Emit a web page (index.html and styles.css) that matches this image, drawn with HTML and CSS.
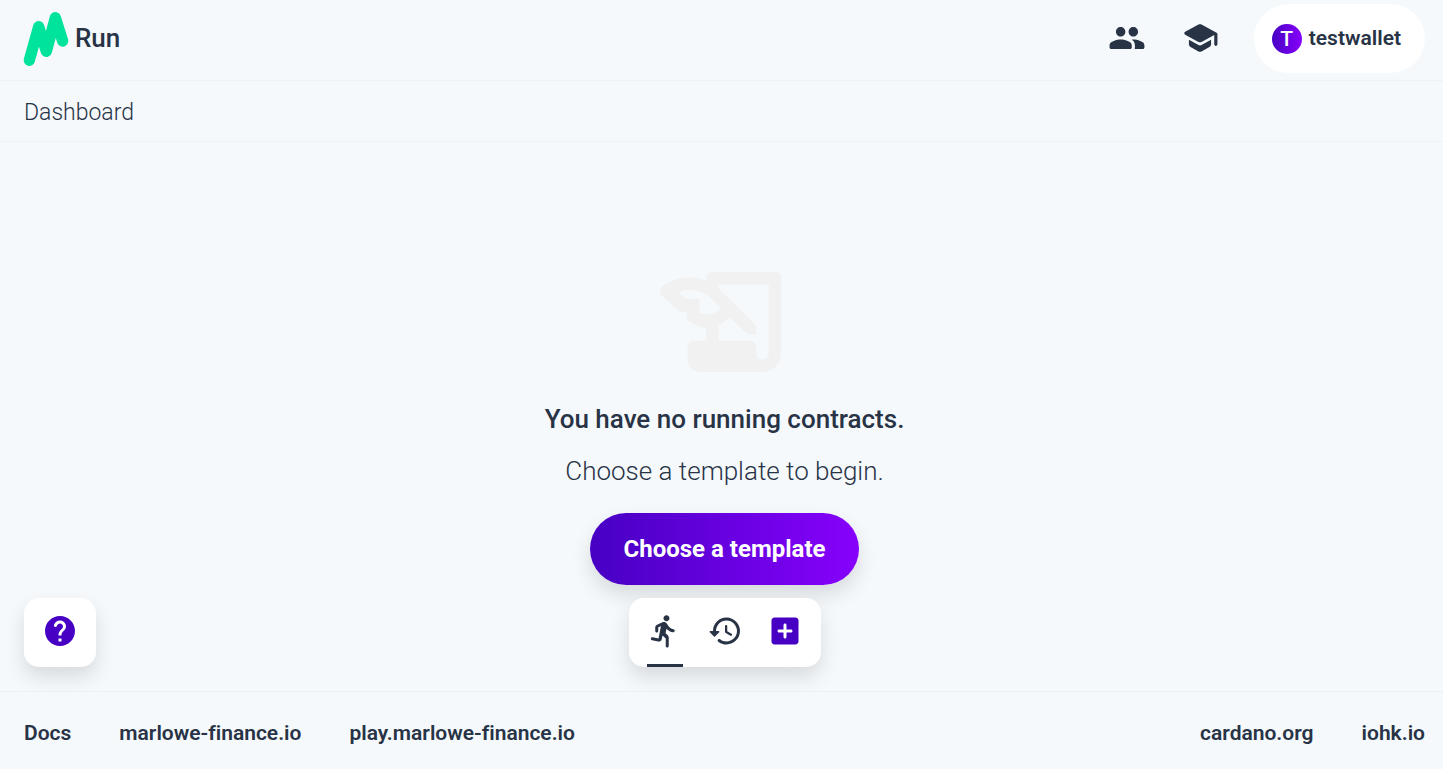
FILE: index.html
```html
<!DOCTYPE html>
<html lang="en">
<head>
<meta charset="utf-8">
<meta name="viewport" content="width=device-width, initial-scale=1">
<title>Marlowe Run</title>
<link rel="stylesheet" href="styles.css">
</head>
<body>
<div class="page">
  <header class="header">
    <a class="brand" href="#">
      <svg class="brand-mark" viewBox="0 0 132 160" aria-hidden="true"><path d="M16 144L44 43L67 117L94 16L116 86" fill="none" stroke="#00e39c" stroke-width="34" stroke-linecap="round" stroke-linejoin="round"/></svg>
      <span class="brand-name">Run</span>
    </a>
    <nav class="header-nav">
      <a class="icon-link" href="#" aria-label="Contacts">
        <svg class="icon large" viewBox="0 0 24 24"><path d="M16 11c1.660 0 2.990-1.340 2.990-3S17.660 5 16 5s-3 1.340-3 3 1.340 3 3 3zM8 11c1.660 0 2.990-1.340 2.990-3S9.660 5 8 5 5 6.340 5 8s1.340 3 3 3zM8 13c-2.330 0-7 1.170-7 3.500V18c0 .55.45 1 1 1h12c.55 0 1-.45 1-1v-1.500C15 14.170 10.330 13 8 13zM16 13c-.29 0-.62.020-.97.050.02.010.03.030.04.040 1.140.830 1.930 1.940 1.930 3.410V18c0 .35-.07.690-.18 1H22c.55 0 1-.45 1-1v-1.500c0-2.330-4.670-3.500-7-3.500z"/></svg>
      </a>
      <a class="icon-link" href="#" aria-label="Tutorials">
        <svg class="icon large" viewBox="0 0 24 24"><path d="M5 13.180v2.810c0 .73.4 1.410 1.040 1.760l5 2.730c.6.330 1.320.330 1.920 0l5-2.730c.64-.35 1.040-1.030 1.040-1.760v-2.810l-6.040 3.300c-.6.330-1.320.330-1.920 0L5 13.180zm6.040-9.660l-8.430 4.600c-.69.380-.69 1.380 0 1.760l8.430 4.600c.6.330 1.320.330 1.920 0L21 10.090V16c0 .55.45 1 1 1s1-.45 1-1V9.590c0-.37-.2-.7-.52-.88l-9.520-5.190c-.6-.32-1.320-.32-1.920 0z"/></svg>
      </a>
      <button class="wallet" type="button"><span class="avatar">T</span><span>testwallet</span></button>
    </nav>
  </header>
  <h1 class="title-bar">Dashboard</h1>
  <main class="main">
    <section class="empty">
      <svg class="empty-icon" viewBox="0 0 24 24" aria-hidden="true"><path fill-rule="evenodd" d="M9 5v.38c-.83-.33-1.720-.5-2.610-.5-1.420 0-2.940.43-4.350 1.390-.51.360-.58 1.090-.14 1.530l2.870 2.610h1.110v1.110c.86.860 1.980 1.310 3.110 1.360V15H7c-.55 0-1 .45-1 1v2c0 1.100.9 2 2 2h10c1.660 0 3-1.340 3-3V5c0-.55-.45-1-1-1H10c-.55 0-1 .45-1 1zM7.890 10.410V8.260H5.610L4.570 7.220C5.140 7 5.760 6.880 6.390 6.880c1.340 0 2.590.52 3.540 1.460l1.410 1.410-.2.2c-.51.510-1.190.8-1.920.8-.47 0-.93-.12-1.330-.34zM19 17c0 .55-.45 1-1 1s-1-.45-1-1v-1c0-.55-.45-1-1-1h-5v-2.590c.57-.23 1.100-.57 1.560-1.030l.2-.2L15.590 14H17v-1.410l-6-5.970V6h8v11z"/></svg>
      <h2 class="empty-title">You have no running contracts.</h2>
      <p class="empty-text">Choose a template to begin.</p>
      <button class="primary" type="button">Choose a template</button>
    </section>
    <div class="dock">
      <button class="card help" type="button" aria-label="Help">
        <svg class="icon accent" viewBox="0 0 24 24"><path fill-rule="evenodd" d="M12 2C6.480 2 2 6.480 2 12s4.480 10 10 10 10-4.480 10-10S17.520 2 12 2zM13 19h-2v-2h2v2zM15.070 11.250l-.9.920C13.450 12.900 13 13.500 13 15h-2v-.5c0-1.100.45-2.100 1.170-2.830l1.240-1.260c.37-.36.59-.86.59-1.410 0-1.100-.9-2-2-2-.93 0-1.710.63-1.930 1.490a.97.970 0 0 1-.93.760h-.3c-.62 0-1.080-.6-.91-1.200C8.440 6.290 10.070 5 12 5c2.210 0 4 1.790 4 4 0 .88-.36 1.680-.93 2.250z"/></svg>
      </button>
      <div class="card tabs">
        <button class="tab active" type="button" aria-label="Running contracts">
          <svg class="icon" viewBox="0 0 24 24"><path d="M13.490 5.480c1.100 0 2-.9 2-2s-.9-2-2-2-2 .9-2 2 .9 2 2 2zM9.890 19.380l1-4.400 2.100 2v5c0 .55.45 1 1 1s1-.45 1-1v-5.640c0-.55-.22-1.070-.62-1.450l-1.480-1.410.6-3c1.070 1.240 2.620 2.130 4.360 2.410.6.090 1.140-.39 1.140-1 0-.49-.36-.9-.85-.98-1.520-.25-2.780-1.150-3.450-2.330l-1-1.600c-.4-.6-1-1-1.700-1-.3 0-.5.1-.8.1L7.210 7.760c-.74.320-1.220 1.040-1.220 1.850v2.370c0 .55.45 1 1 1s1-.45 1-1v-2.400l1.800-.7-1.600 8.100-3.920-.8c-.54-.11-1.070.24-1.180.78V17c-.11.540.24 1.070.78 1.180l4.110.82c1.060.210 2.100-.46 2.350-1.520z" transform="translate(-.5)"/></svg>
        </button>
        <button class="tab" type="button" aria-label="History">
          <svg class="icon" viewBox="0 0 24 24"><path d="M13.260 3C8.170 2.860 4 6.950 4 12H2.210c-.45 0-.67.540-.35.850l2.790 2.800c.2.200.51.200.71 0l2.790-2.800c.31-.31.090-.85-.36-.85H6c0-3.900 3.180-7.050 7.100-7 3.720.05 6.850 3.180 6.900 6.900.05 3.910-3.100 7.100-7 7.100-1.610 0-3.100-.55-4.280-1.480-.4-.31-.96-.28-1.320.08-.42.42-.39 1.130.08 1.490C9 20.290 10.910 21 13 21c5.050 0 9.140-4.170 9-9.260-.13-4.690-4.050-8.610-8.740-8.740zM12.750 8c-.41 0-.75.340-.75.750v3.680c0 .35.190.68.490.86l3.120 1.850c.36.210.82.090 1.030-.26.210-.36.090-.82-.26-1.030l-2.880-1.710v-3.400c0-.4-.34-.74-.75-.74z"/></svg>
        </button>
        <button class="tab" type="button" aria-label="New contract">
          <svg class="icon accent" viewBox="0 0 24 24"><path fill-rule="evenodd" d="M19 3H5c-1.110 0-2 .9-2 2v14c0 1.100.89 2 2 2h14c1.100 0 2-.9 2-2V5c0-1.100-.9-2-2-2zM16 13h-3v3c0 .55-.45 1-1 1s-1-.45-1-1v-3H8c-.55 0-1-.45-1-1s.45-1 1-1h3V8c0-.55.45-1 1-1s1 .45 1 1v3h3c.55 0 1 .45 1 1s-.45 1-1 1z"/></svg>
        </button>
      </div>
    </div>
  </main>
  <footer class="footer">
    <nav class="links"><a href="#">Docs</a><a href="#">marlowe-finance.io</a><a href="#">play.marlowe-finance.io</a></nav>
    <nav class="links"><a href="#">cardano.org</a><a href="#">iohk.io</a></nav>
  </footer>
</div>
</body>
</html>
```
FILE: styles.css
```css
* { box-sizing: border-box; }
body {
  margin: 0;
  background: #f5f9fc;
  color: #283346;
  font-family: Roboto, "Liberation Sans", sans-serif;
  font-variant-ligatures: none;
}
button {
  border: 0;
  padding: 0;
  background: none;
  color: inherit;
  font: inherit;
  cursor: pointer;
}
a { color: inherit; text-decoration: none; }
.page { display: flex; flex-direction: column; min-height: 100vh; }
.header {
  display: flex;
  align-items: center;
  justify-content: space-between;
  padding: 4px 18px 7px 24px;
  border-bottom: 1px solid #f1f1f1;
}
.brand { display: flex; align-items: center; gap: 7px; }
.brand-mark { width: 44px; height: 54px; overflow: visible; }
.brand-name { padding-bottom: 2px; font-size: 26px; line-height: 28px; font-weight: 500; }
.header-nav { display: flex; align-items: center; gap: 35px; }
.icon-link { display: flex; padding-bottom: 2px; }
.icon { display: block; width: 36px; height: 36px; fill: #283346; }
.large { width: 38px; height: 38px; }
.accent { fill: #4700c3; }
.wallet {
  display: flex;
  align-items: center;
  gap: 7px;
  padding: 18px 24px 18px 18px;
  border-radius: 36px;
  background: #fff;
  font-size: 21px;
  line-height: 33px;
  font-weight: 600;
}
.avatar {
  width: 30px;
  height: 30px;
  border-radius: 50%;
  background: linear-gradient(to right, #4700c3, #8701fc);
  color: #fff;
  line-height: 31px;
  font-weight: 500;
}
.title-bar {
  margin: 0;
  padding: 14px 18px 10px 24px;
  border-bottom: 1px solid #f1f1f1;
  font-size: 23px;
  line-height: 36px;
  font-weight: 300;
}
.main {
  position: relative;
  flex: 1;
  display: flex;
  flex-direction: column;
  justify-content: center;
  padding: 0 18px 2px 24px;
}
.empty { display: flex; flex-direction: column; align-items: center; text-align: center; }
.empty-icon { width: 150px; height: 150px; fill: #f1f1f1; }
.empty-title { margin: 2px 0 12px; font-size: 26px; line-height: 40px; font-weight: 500; }
.empty-text { margin: 0 0 22px; font-size: 26px; line-height: 40px; font-weight: 300; }
.primary {
  padding: 18px 34px;
  border-radius: 36px;
  background: linear-gradient(to right, #4700c3, #8701fc);
  box-shadow: 0 10px 20px rgba(0, 0, 0, .12);
  color: #fff;
  font-size: 24px;
  line-height: 36px;
  font-weight: 700;
}
.dock {
  position: absolute;
  left: 24px;
  right: 18px;
  bottom: 24px;
  display: grid;
  grid-template-columns: 1fr auto 1fr;
}
.card { border-radius: 15px; background: #fff; box-shadow: 0 10px 20px rgba(0, 0, 0, .12); }
.help { justify-self: start; padding: 15px 18px 18px; }
.tabs { display: flex; gap: 24px; padding: 0 18px; }
.tab { padding: 15px 0; border-bottom: 3px solid transparent; }
.active { border-color: #283346; }
.footer {
  display: flex;
  justify-content: space-between;
  padding: 26px 18px 21px 24px;
  border-top: 1px solid #edf1f4;
  font-size: 21px;
  line-height: 30px;
  font-weight: 600;
}
.links { display: flex; gap: 48px; }
```
